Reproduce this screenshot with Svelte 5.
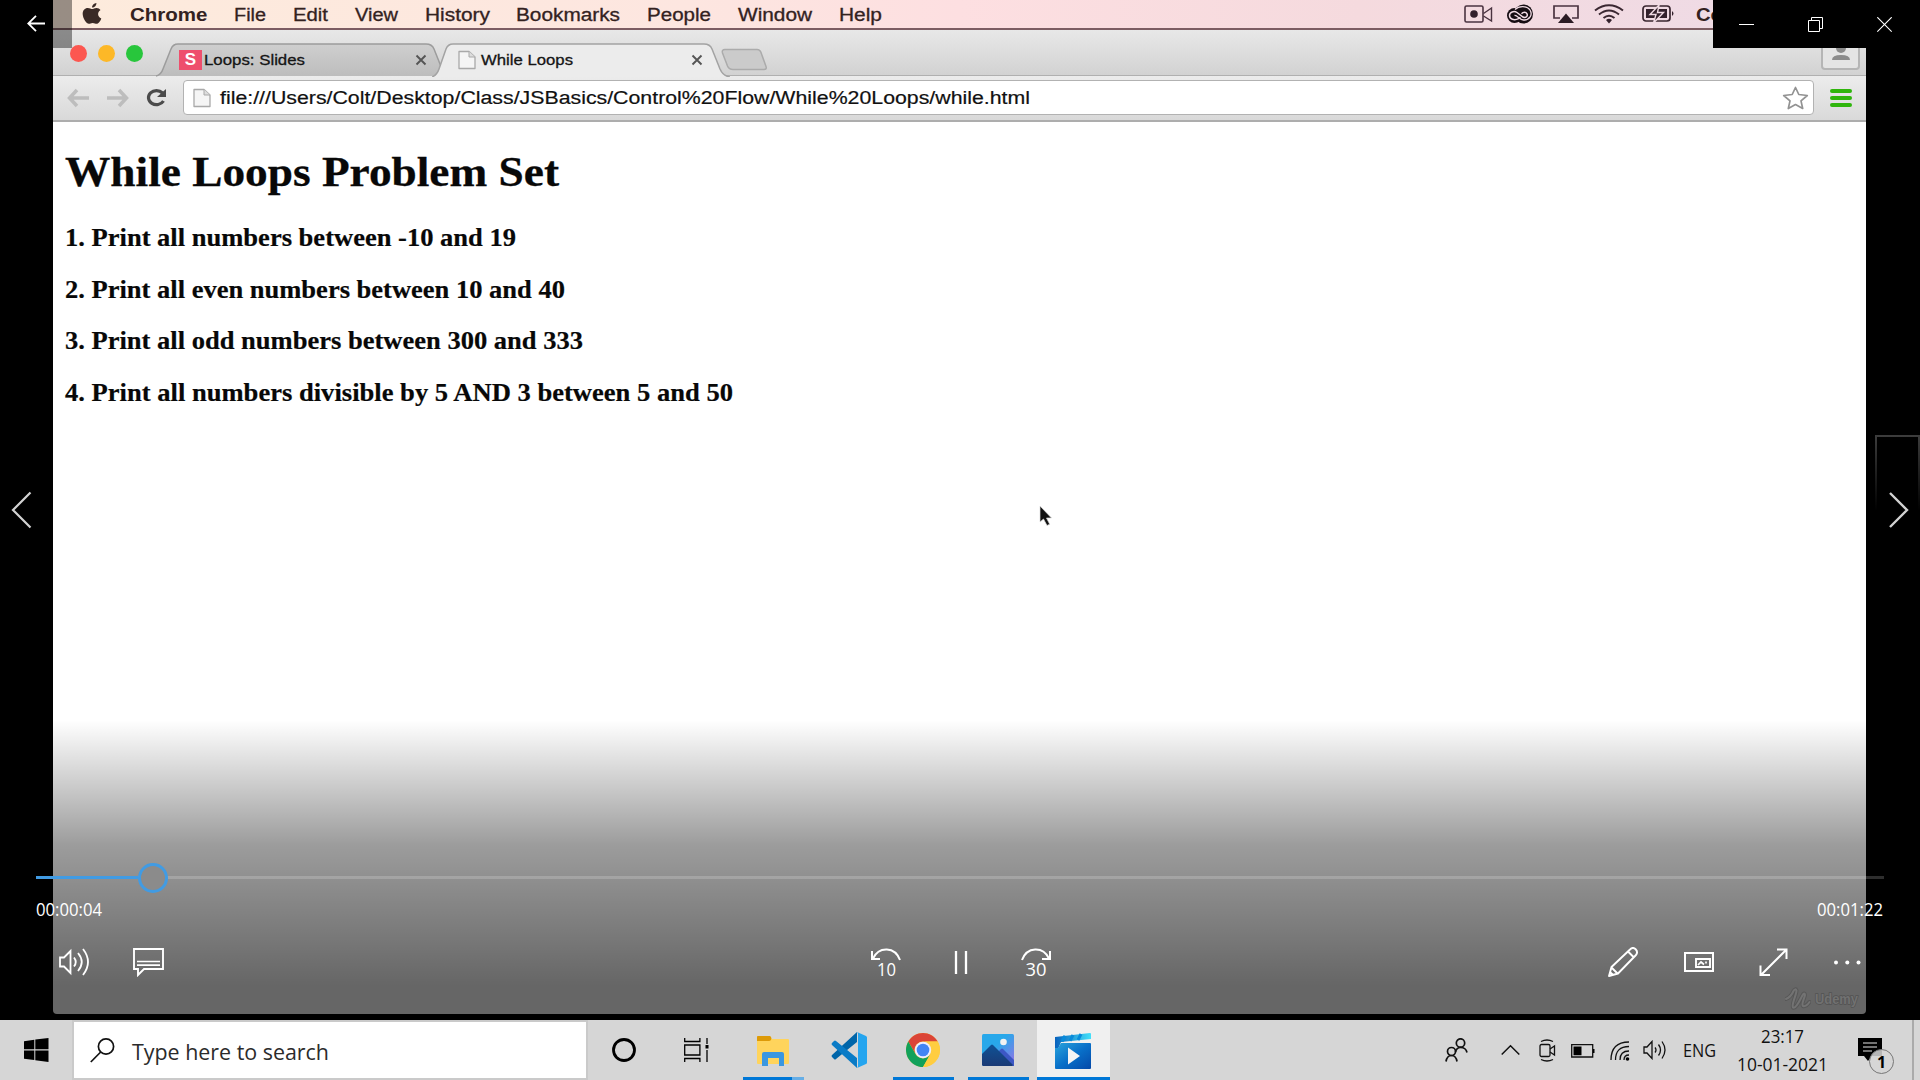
<script>
  const menus = [
    ['Chrome', 77.5, true], ['File', 32], ['Edit', 35], ['View', 43], ['History', 65],
    ['Bookmarks', 104], ['People', 64], ['Window', 74], ['Help', 43]
  ];
  const problems = [
    ['1. Print all numbers between -10 and 19', 451],
    ['2. Print all even numbers between 10 and 40', 500],
    ['3. Print all odd numbers between 300 and 333', 518],
    ['4. Print all numbers divisible by 5 AND 3 between 5 and 50', 668]
  ];
</script>

<!-- One line of text fitted to an exact advance width -->
{#snippet fit(text, width, height, baseline, kind)}
  <svg class="fit {kind}" {width} {height}>
    <text x="0" y={baseline} textLength={width} lengthAdjust="spacingAndGlyphs">{text}</text>
  </svg>
{/snippet}

{#snippet page()}
  <svg class="doc" width="18" height="20" viewBox="0 0 18 20">
    <path d="M1 1.5h10l6 5.500v11.500H1z" fill="#f5f5f5" stroke="#a9a9a9" stroke-width="1.300" stroke-linejoin="round" />
    <path d="M11 1.500V7h6" fill="#ddd" stroke="#a9a9a9" />
  </svg>
{/snippet}

<div class="screen">
  <div class="player">
    <div class="video">
      <header class="menubar">
        <svg class="apple" width="20" height="22" viewBox="0 0 20 22">
          <path d="M14.400 0c.2 2.300-2 4.700-4.300 4.600C9.900 2.400 12 .2 14.400 0zM10.300 6c1 0 2.300-1.200 4.300-1.100 1.500.1 3 .8 3.900 2.200-3.600 2.300-2.900 7 .8 8.400-.9 2.500-2.700 5.300-4.600 5.300-1.500 0-2.100-.9-4-.9s-2.500.9-3.900.9C4.600 20.800 1 16 .7 11.300.5 7.300 2.900 4.900 5.800 4.900 7.600 4.900 9.200 6 10.300 6z" fill="#3a2a26" />
        </svg>
        <nav>
          {#each menus as [label, w, bold]}
            {@render fit(label, w, 28, 20.500, bold ? 'menu bold' : 'menu')}
          {/each}
        </nav>
        <div class="status">
          <svg width="29" height="20" viewBox="0 0 29 20"><rect x="1" y="2" width="18" height="16" rx="1.500" fill="none" stroke="#4a3340" stroke-width="1.600" /><circle cx="10" cy="10" r="3.800" fill="#33212c" /><path d="M19.500 9.500l8-5.500v13l-8-5" fill="none" stroke="#4a3340" stroke-width="1.400" /></svg>
          <svg width="29" height="20" viewBox="0 0 29 20">
            <circle cx="17.500" cy="10" r="9.500" fill="#160e13" /><circle cx="8.500" cy="11.500" r="7.500" fill="#160e13" />
            <path d="M14.500 13.500l-2 1.200C8 17 3.500 15 3.500 11.500S8 6.500 11 8.500l6 4.500c3 1.500 5-1 4-3.200-1-2-3.800-2-5.500 0" fill="none" stroke="#f0dbe4" stroke-width="1.500" />
            <path d="M9 5.500C13 1.500 21 1.500 24 6c3 5-.5 10-6.500 10-4 0-6-5-9-4.500" fill="none" stroke="#f0dbe4" stroke-width="1.300" />
          </svg>
          <svg width="26" height="20" viewBox="0 0 26 20"><path d="M7 14H1V2h24v12h-6" fill="none" stroke="#4a3340" stroke-width="1.700" /><path d="M13 9.500l8 9.500H5z" fill="#2b1c25" /></svg>
          <svg width="30" height="20" viewBox="0 0 30 20"><path d="M1 6.500Q15-4 29 6.500M5 10.500Q15 2.500 25 10.500M9.500 14Q15 9.500 20.500 14" fill="none" stroke="#3a2731" stroke-width="2" /><path d="M12 16q3-2.500 6 0l-3 3.500z" fill="#33212c" /></svg>
          <svg width="33" height="20" viewBox="0 0 33 20"><rect x="1" y="2" width="27" height="15" rx="3" fill="none" stroke="#3a2731" stroke-width="1.700" /><path d="M4 5h21v9H4z" fill="#33212c" /><path d="M17 1L8 10.500h6L11.500 19l10-10.500h-6z" fill="#33212c" stroke="#f0dbe4" stroke-width="1.400" /><path d="M30 7q3 2.500 0 5z" fill="#33212c" /></svg>
          {@render fit('Co', 27, 28, 20.500, 'menu semi')}
        </div>
      </header>

      <div class="tabs">
        <div class="lights"><i class="red"></i><i class="amber"></i><i class="green"></i></div>
        <div class="tab inactive">
          <svg class="shape" width="298" height="34" viewBox="0 0 298 34"><path d="M0 33Q5 32 7 26L15 6Q17 1 22 1H270Q276 1 278 6L286 26Q289 33 296 33" fill="url(#shade)" stroke="#9c9c9c" stroke-width="1.500" /><defs><linearGradient id="shade" x2="0" y2="1"><stop stop-color="#cfcfcf" /><stop offset="1" stop-color="#bdbdbd" /></linearGradient></defs></svg>
          <b class="slides">S</b>
          {@render fit('Loops: Slides', 101, 30, 20.500, 'tablabel')}
          <svg class="x" width="12" height="12" viewBox="0 0 12 12"><path d="M1.500 1.500l9 9m0-9l-9 9" stroke="#555" stroke-width="1.900" /></svg>
        </div>
        <div class="tab active">
          <svg class="shape" width="298" height="34" viewBox="0 0 298 34"><path d="M0 34Q5 32 7 26L14 6Q16 1 21 1H272Q278 1 280 6L288 26Q291 33 298 34" fill="#ececec" stroke="#a3a3a3" stroke-width="1.500" /></svg>
          {@render page()}
          {@render fit('While Loops', 92, 30, 20.500, 'tablabel')}
          <svg class="x" width="12" height="12" viewBox="0 0 12 12"><path d="M1.500 1.500l9 9m0-9l-9 9" stroke="#555" stroke-width="1.900" /></svg>
        </div>
        <svg class="newtab" width="47" height="24" viewBox="0 0 47 24"><path d="M4 1.500H36q3 0 4 3l5 14q1 3-2 3H12q-4 0-5.500-3.500L1.500 5q-1-3.500 2.500-3.500z" fill="#cbcbcb" stroke="#ababab" stroke-width="1.500" /></svg>
        <div class="profile">
          <svg width="20" height="22" viewBox="0 0 20 22"><circle cx="10" cy="8" r="5" fill="#8b8b8b" /><path d="M1 20q0-5 9-5t9 5z" fill="#8b8b8b" /></svg>
        </div>
      </div>

      <div class="toolbar">
        <svg width="23" height="20" viewBox="0 0 23 20"><path d="M10 2L2.500 10l7.500 8M3 10h19" fill="none" stroke="#bdbdbd" stroke-width="3.500" /></svg>
        <svg width="23" height="20" viewBox="0 0 23 20"><path d="M13 2l7.500 8L13 18M20 10H1" fill="none" stroke="#bdbdbd" stroke-width="3.500" /></svg>
        <svg class="reload" width="21" height="20" viewBox="0 0 21 20"><path d="M16.500 5A8 7 0 1 0 17.500 13" fill="none" stroke="#4b4b4b" stroke-width="3.200" /><path d="M20 1v8h-9z" fill="#4b4b4b" /></svg>
        <div class="address">
          {@render page()}
          {@render fit('file:///Users/Colt/Desktop/Class/JSBasics/Control%20Flow/While%20Loops/while.html', 810, 33, 23, 'url')}
          <svg class="star" width="27" height="24" viewBox="0 0 27 24"><path d="M13.500 1.500l3.300 7 8.500 1-6.300 5.400 1.700 7.600-7.200-3.900-7.200 3.900L8 14.900 1.700 9.500l8.500-1z" fill="#fff" stroke="#929292" stroke-width="1.700" stroke-linejoin="round" /></svg>
        </div>
        <div class="burger"><i></i><i></i><i></i></div>
      </div>

      <main>
        <h1>{@render fit('While Loops Problem Set', 494, 51, 37, 'title')}</h1>
        {#each problems as [text, w]}
          <h3>{@render fit(text, w, 30, 23, 'problem')}</h3>
        {/each}
      </main>
      <svg class="cursor" width="14" height="22" viewBox="0 0 14 22"><path d="M1 1v16l3.500-3L8 20.500l2.700-1.300L7.500 13H12.500z" fill="#111" stroke="#ddd" stroke-width=".7" /></svg>
    </div>

    <div class="overlay">
      <div class="titlebar">
        <div class="back"><svg width="18" height="17" viewBox="0 0 18 17"><path d="M9 .8L1.200 8.500 9 16.200M1 8.500h17" fill="none" stroke="#fff" stroke-width="1.800" /></svg></div>
        <div class="window">
          <svg width="15" height="16" viewBox="0 0 15 16"><path d="M0 7.500h15" stroke="#fff" /></svg>
          <svg width="15" height="16" viewBox="0 0 15 16"><path d="M.5 3.500h11v11H.5zM3.500 3.500v-3h11v11h-3" fill="none" stroke="#fff" /></svg>
          <svg width="15" height="16" viewBox="0 0 15 16"><path d="M.3.300l14.400 14.400m0-14.400L.3 14.700" stroke="#fff" stroke-width="1.200" /></svg>
        </div>
      </div>
      <div class="skip">
        <svg width="22" height="38" viewBox="0 0 22 38"><path d="M19.500 1.500L2 19l17.500 17.500" fill="none" stroke="#d2d2d2" stroke-width="2.200" /></svg>
        <div class="next"><svg width="20" height="38" viewBox="0 0 20 38"><path d="M1 2l17 17L1 36" fill="none" stroke="#d2d2d2" stroke-width="2.400" /></svg></div>
      </div>
      <div class="controls">
        <div class="track"><div class="played"></div><div class="thumb"></div></div>
        <div class="times">
          {@render fit('00:00:04', 66, 24, 19, 'time')}
          {@render fit('00:01:22', 66, 24, 19, 'time')}
        </div>
        <div class="buttons">
          <div class="group left">
            <svg width="30" height="30" viewBox="0 0 30 30"><path d="M1 10.500h4l6.500-6.500v22L5 19.500H1z" fill="none" stroke="#fff" stroke-width="1.800" /><path d="M15 10.500q3.500 4.500 0 9M19 6q7.500 9 0 18M24 2q10 13 0 26" fill="none" stroke="#fff" stroke-width="1.800" /></svg>
            <svg width="31" height="30" viewBox="0 0 31 30"><path d="M1 2h29v20H11l-6 6v-6H1z" fill="none" stroke="#fff" stroke-width="1.900" /><path d="M4 14.500h23M4 18.200h23" stroke="#fff" stroke-width="1.700" /></svg>
          </div>
          <div class="group center">
            <svg class="seek" width="32" height="34" viewBox="0 0 32 34"><path d="M2 4v8h8M3 11.500C9-1 25-.5 30 13" fill="none" stroke="#fff" stroke-width="2" /><text x="7" y="29" textLength="19" lengthAdjust="spacingAndGlyphs">10</text></svg>
            <svg width="14" height="30" viewBox="0 0 14 30"><path d="M2 4v23M12 4v23" stroke="#fff" stroke-width="2.300" /></svg>
            <svg class="seek" width="32" height="34" viewBox="0 0 32 34"><path d="M30 4v8h-8M29 11.500C23-1 7-.5 2 13" fill="none" stroke="#fff" stroke-width="2" /><text x="5.500" y="29" textLength="21" lengthAdjust="spacingAndGlyphs">30</text></svg>
          </div>
          <div class="group right">
            <svg width="31" height="30" viewBox="0 0 31 30"><path d="M1 29l2.500-9L22 2.500c4-4 9 1.500 6 5.500L10 26.500zM3.500 20.500l6 6M20 4.500l6 6M2 25l3 3" fill="none" stroke="#fff" stroke-width="1.900" stroke-linejoin="round" /></svg>
            <svg width="30" height="30" viewBox="0 0 30 30"><path d="M1 6h28v18H1z" fill="none" stroke="#fff" stroke-width="2" /><path d="M12 12h14v8H12z" fill="none" stroke="#fff" stroke-width="1.900" /><path d="M14 18l3-3 3 2.500M22 14.500v2" fill="none" stroke="#fff" stroke-width="1.700" /></svg>
            <svg width="29" height="30" viewBox="0 0 29 30"><path d="M18 2.500h9.500V12M27 3L2 28M1.500 18.500V28H11" fill="none" stroke="#fff" stroke-width="2" /></svg>
            <svg width="28" height="30" viewBox="0 0 28 30"><circle cx="3" cy="15.500" r="2" fill="#fff" /><circle cx="14.300" cy="15.500" r="2" fill="#fff" /><circle cx="25.500" cy="15.500" r="2" fill="#fff" /></svg>
          </div>
        </div>
        <div class="mark">
          <svg width="26" height="24" viewBox="0 0 26 24"><path d="M1 12Q6 10 8.500 4 10.500 1 11.500 3.500C11.500 8 6 18 8 20.500c3 2 8-10 10-13q2-2 2 .5c-1 5-4 9-2 11q3 1 6.500-4" fill="none" stroke="#535353" stroke-width="4" stroke-linecap="round" /><path d="M1 12Q6 10 8.500 4 10.500 1 11.500 3.500C11.500 8 6 18 8 20.500c3 2 8-10 10-13q2-2 2 .5c-1 5-4 9-2 11q3 1 6.500-4" fill="none" stroke="#787878" stroke-width="2" stroke-linecap="round" /></svg>
          {@render fit('Udemy', 43, 24, 17, 'brand')}
        </div>
      </div>
    </div>
  </div>

  <footer>
    <div class="start"><svg width="25" height="24" viewBox="0 0 25 24"><path d="M0 3.300L10.300 1.800V11.300H0zM11.300 1.600L24.500 0v11.300H11.300zM0 12.400h10.300v9.700L0 20.700zM11.300 12.400h13.200V24l-13.200-1.800z" /></svg></div>
    <div class="search">
      <svg width="25" height="25" viewBox="0 0 25 25"><circle cx="16" cy="8.500" r="7.600" fill="none" stroke="#111" stroke-width="1.700" /><path d="M10.700 14L.8 24" stroke="#111" stroke-width="1.700" /></svg>
      {@render fit('Type here to search', 197, 40, 28, 'query')}
    </div>
    <div class="apps">
      <div class="app"><svg width="26" height="26" viewBox="0 0 26 26"><circle cx="13" cy="13" r="10.500" fill="none" stroke="#000" stroke-width="2.800" /></svg></div>
      <div class="app view"><svg width="25" height="24" viewBox="0 0 25 24"><path d="M.7 0v3.500h15.200V0M.7 7h15.200v10H.7zM.7 24v-3.500h15.200V24M23 0v6M23 12v12" fill="none" stroke="#000" stroke-width="1.300" /><path d="M21.500 7h3v3.500h-3z" /></svg></div>
      <div class="app open split"><svg width="32" height="30" viewBox="0 0 32 30"><path d="M0 1q0-1 1-1h12l2 3h16q1 0 1 1v23q0 1-1 1H1q-1 0-1-1z" fill="#ffd45c" /><path d="M0 1q0-1 1-1h12q2 1 1 4-1 1-2 1H0z" fill="#dd9a08" /><path d="M5 30V18q0-2 2-2h18q2 0 2 2v12h-5v-8H11v8z" fill="#3b97e0" /></svg></div>
      <div class="app"><svg width="36" height="36" viewBox="0 0 36 36"><path d="M26 0v10L5 27q-1 1-2 0l-2-2q-1-1 0-2z" fill="#0065a9" /><path d="M26 36V26L5 9Q4 8 3 9l-2 2q-1 1 0 2z" fill="#0a7bc6" /><path d="M26 0l9 4q1 .5 1 1.500v25q0 1-1 1.500l-9 4q1-1 1-2V2q0-1-1-2z" fill="#25a5ef" /></svg></div>
      <div class="app open"><svg width="34" height="34" viewBox="0 0 34 34"><circle cx="17" cy="17" r="17" fill="#fc4" /><path d="M2.280 8.500A17 17 0 0 1 31.720 8.500H17A8.500 8.500 0 0 0 9.640 21.250z" fill="#db4437" /><path d="M2.280 8.500L9.640 21.250A8.500 8.500 0 0 0 24.360 21.250L17 34A17 17 0 0 1 2.280 8.500z" fill="#12a15a" /><path d="M31.720 8.500H17a8.500 8.500 0 0 1 7.360 12.750L17 34A17 17 0 0 0 31.720 8.500z" fill="#ffcd40" /><circle cx="17" cy="17" r="8.200" fill="#eef" /><circle cx="17" cy="17" r="6.300" fill="#4285f4" /></svg></div>
      <div class="app open"><svg width="32" height="32" viewBox="0 0 32 32"><defs><linearGradient id="sky" x2="1" y2="1"><stop offset=".4" stop-color="#28a8ea" /><stop offset="1" stop-color="#9a70e5" /></linearGradient><linearGradient id="hill" x2="0" y2="1"><stop stop-color="#0f5296" /><stop offset="1" stop-color="#1a3a75" /></linearGradient></defs><rect width="32" height="32" rx="1.500" fill="url(#sky)" /><path d="M14 20l5-5q1-1 2 0l11 11v6H14z" fill="#3c57c4" /><path d="M0 20l9-9q1-1 2 0l20 20-1 1H1l-1-1z" fill="url(#hill)" /><circle cx="21.500" cy="8" r="3.300" fill="#f2f2f2" /></svg></div>
      <div class="app open current"><svg width="36" height="36" viewBox="0 0 36 36"><defs><linearGradient id="film" x2="1" y2="1"><stop stop-color="#2aa4dc" /><stop offset=".5" stop-color="#0870c9" /><stop offset="1" stop-color="#0548a8" /></linearGradient><linearGradient id="clap" x2="1"><stop stop-color="#0862bd" /><stop offset="1" stop-color="#43e0fa" /></linearGradient></defs><path d="M0 4l35-4q1 0 1 1v5L6 9l-3 7H0z" fill="url(#clap)" /><path d="M10 2.800l-3 5.700M18 2l-3 5.700M26 1l-3 6" stroke="#078bdb" stroke-width="3" /><path d="M6 10h29q1 0 1 1v24q0 1-1 1H1q-1 0-1-1V15h3z" fill="url(#film)" /><path d="M13 14.500L25 23 13 31.500z" fill="#f4f4f4" /></svg></div>
    </div>
    <div class="tray">
      <svg class="people" width="23" height="24" viewBox="0 0 23 24"><circle cx="15.500" cy="5" r="4.200" fill="none" stroke="#111" stroke-width="1.700" /><circle cx="6.500" cy="13.500" r="4" fill="none" stroke="#111" stroke-width="1.700" /><path d="M10.500 14q1-4.500 5-4.500 5.500 0 6.500 5M1 23.500q1-6 5.500-6t5.500 6" fill="none" stroke="#111" stroke-width="1.700" /></svg>
      <svg class="up" width="19" height="12" viewBox="0 0 19 12"><path d="M.7 10.500l8.800-8.800 8.800 8.800" fill="none" stroke="#111" stroke-width="1.500" /></svg>
      <svg class="meet" width="17" height="23" viewBox="0 0 17 23"><rect x="1" y="5.500" width="10" height="12" rx="1.500" fill="none" stroke="#111" stroke-width="1.300" /><path d="M11 10l4.500-3v9L11 13M2 2.500q6-3 12 0M2 20.500q6 3 12 0" fill="none" stroke="#111" stroke-width="1.300" /></svg>
      <svg class="battery" width="24" height="14" viewBox="0 0 24 14"><path d="M.7.700h21v12.300H.7z" fill="none" stroke="#111" stroke-width="1.300" /><path d="M2.500 2.500h8v8.700h-8zM22 5h1.500v4H22z" /></svg>
      <svg class="wifi" width="20" height="20" viewBox="0 0 20 20"><path d="M1 19Q1 1 19 1M5.500 19Q5.500 5.500 19 5.500M10 19q0-9 9-9M14 19q0-5 5-5" fill="none" stroke="#111" stroke-width="1.300" /><circle cx="17.500" cy="18" r="1.800" /></svg>
      <svg class="vol" width="24" height="20" viewBox="0 0 24 20"><path d="M1 7h3l5-5.500v17L4 13H1z" fill="none" stroke="#111" stroke-width="1.300" /><path d="M12 7.500q2 2.500 0 5M15.500 4.500q4 5.500 0 11M19 1.500q6 8.500 0 17" fill="none" stroke="#111" stroke-width="1.300" /></svg>
      {@render fit('ENG', 33, 30, 22, 'sys')}
      <div class="clock">
        {@render fit('23:17', 43, 28, 21, 'sys')}
        {@render fit('10-01-2021', 91, 28, 21, 'sys')}
      </div>
      <svg class="note" width="37" height="38" viewBox="0 0 37 38"><path d="M0 1h24v18H14l-4 5-4-5H0z" /><path d="M5 6h14M5 10h14M5 14h9" stroke="#e4e4e4" stroke-width="1.200" /><circle cx="23.500" cy="24.500" r="12" fill="#d6d6d6" fill-opacity=".85" stroke="#777" /><text x="19" y="30.500">1</text></svg>
    </div>
    <div class="peek"></div>
  </footer>
</div>

<style>
  :global(body) { margin: 0; background: #000; }
  .screen { width: 1920px; height: 1080px; display: grid; grid-template-rows: 1020px 60px; overflow: hidden; font-family: "Liberation Sans", sans-serif; }
  svg { display: block; flex: none; }
  .fit { overflow: visible; }
  .player { display: grid; background: #000; padding: 0; }
  .video, .overlay { grid-area: 1 / 1; }
  .video { position: relative; width: 1813px; height: 1014px; margin-left: 53px; background: #fff; border-radius: 0 0 4px 4px; overflow: hidden; }

  .menubar { box-sizing: border-box; height: 30px; display: flex; align-items: flex-start; padding-left: 29px; border-bottom: 2px solid #7c5c62; background: linear-gradient(90deg, #fdebdc, #fde6e0 35%, #fddfe1 50%, #f5dade 72%, #eddbe7); }
  .apple { margin: 3px 28px 0 0; }
  nav { display: flex; gap: 26.800px; }
  .menu { font-size: 18px; fill: #33221f; stroke: #33221f; stroke-width: .3px; }
  .menu.bold, .menu.semi { font-weight: 700; stroke: none; }
  .status { display: grid; grid-template-columns: 42px 47px 41px 48px 54px 27px; align-items: center; height: 28px; margin-left: auto; margin-right: 143px; }
  .tabs { display: flex; box-sizing: border-box; height: 46px; padding: 14px 0 0 17px; background: linear-gradient(#e8e8e8, #d2d2d2); border-bottom: 1px solid #b0b0b0; }
  .lights { display: flex; gap: 11px; width: 86px; margin-right: 0; }
  .lights i { width: 17px; height: 17px; border-radius: 50%; margin-top: 1px; }
  .red { background: #fc5750; }
  .amber { background: #fdb827; }
  .green { background: #28c63c; }
  .tab { position: relative; display: flex; align-items: flex-start; width: 276px; box-sizing: border-box; }
  .tab > :global(*) { position: relative; }
  .tab .shape { position: absolute; left: 0; top: -1px; }
  .inactive { padding-left: 23px; }
  .active { padding-left: 26px; width: 289px; }
  .slides { width: 23px; height: 20px; margin: 6px 2px 0 0; background: #ee4f6d; color: #fff; font: 700 17px/20px "Liberation Sans", sans-serif; text-align: center; }
  .tab .doc { margin: 6px 5px 0 0; }
  .tablabel { font-size: 15px; fill: #151515; stroke: #151515; stroke-width: .3px; }
  .x { margin: 10px 0 0 auto; }
  .inactive .x { margin-right: 5px; }
  .active .x { margin-right: 18px; }
  .newtab { margin: 4px 0 0 0; }
  .profile { box-sizing: border-box; width: 39px; height: 40px; margin: -14px 6px 0 auto; border: 2px solid #b5b5b5; border-radius: 4px; background: #e4e4e4; display: flex; justify-content: center; align-items: flex-end; padding-bottom: 6px; }

  .toolbar { box-sizing: border-box; height: 46px; display: flex; align-items: center; padding: 0 14px 1px 14px; background: linear-gradient(#ececec, #d9d9d9); border-bottom: 2px solid #adadad; }
  .toolbar > svg { margin-right: 16px; }
  .toolbar > .reload { margin: 0 16px 0 1px; }
  .address { box-sizing: border-box; width: 1631px; height: 35px; display: flex; align-items: center; padding: 0 4px 0 9px; border: 1px solid #b2b2b2; border-radius: 4px; background: #fff; }
  .address .doc { margin-right: 9px; }
  .url { font-size: 18px; fill: #111; stroke: #111; stroke-width: .2px; }
  .star { margin-left: auto; }
  .burger { display: grid; gap: 3px; width: 22px; margin-left: auto; }
  .burger i { height: 4px; background: #2fb50c; border-radius: 2px; }

  main { padding: 27px 0 0 11.500px; font-family: "Liberation Serif", serif; }
  h1, h3 { margin: 0; }
  h1 { height: 74px; }
  h3 { height: 51.700px; }
  .title, .problem { font-family: "Liberation Serif", serif; font-weight: 700; fill: #080808; }
  .title { font-size: 42px; stroke: #080808; stroke-width: .3px; }
  .problem { font-size: 24.500px; stroke: #080808; stroke-width: .2px; }
  .cursor { position: absolute; left: 986px; top: 505px; }

  .overlay { position: relative; display: grid; grid-template-rows: 48px 387px 285px 300px; min-width: 0; }
  .titlebar { display: flex; justify-content: space-between; }
  .back { width: 45px; padding: 15px 0 0 27px; height: 33px; background: rgba(0, 0, 0, .4); }
  .window { box-sizing: border-box; width: 207px; display: flex; justify-content: space-between; padding: 17px 28px 0 26px; background: #000; }
  .skip { grid-row: 3; display: flex; justify-content: space-between; align-items: flex-start; }
  .skip > svg { margin: 56px 0 0 11px; }
  .next { box-sizing: border-box; width: 45px; height: 75px; padding: 54px 0 0 12px; border: 2px solid; border-image: linear-gradient(#3c3c3c, #000) 1; border-bottom: 0; }
  .controls { grid-row: 4; position: relative; box-sizing: border-box; padding: 156px 36px 0; background: linear-gradient(rgba(0, 0, 0, 0), rgba(0, 0, 0, .39) 125px, rgba(0, 0, 0, .6) 265px); }
  .track { height: 3px; background: rgba(255, 255, 255, .18); display: flex; align-items: center; }
  .played { width: 102px; height: 3px; background: #419be3; }
  .thumb { box-sizing: border-box; flex: none; width: 30px; height: 30px; border: 3px solid #419be3; border-radius: 50%; background: #8b8b8b; }
  .times { display: flex; justify-content: space-between; margin: 18px 1px 0 0; }
  .time { font-family: "Open Sans", sans-serif; font-size: 17.500px; fill: #fff; }
  .buttons { display: grid; grid-template-columns: 1fr auto 1fr; height: 30px; margin-top: 26px; }
  .group { display: flex; }
  .left { gap: 44px; padding-left: 23px; }
  .center { gap: 52px; padding-left: 1px; }
  .right { justify-content: flex-end; gap: 45px; padding-right: 23px; }
  .seek text { font: 18px "Open Sans", sans-serif; fill: #fff; }
  .mark { display: flex; justify-content: flex-end; gap: 4px; margin: 10px 26px 0 0; opacity: .75; }
  .brand { font-size: 14.500px; font-weight: 700; fill: #757575; stroke: #4c4c4c; stroke-width: 1.500px; paint-order: stroke; }

  footer { display: flex; background: #d6d6d6; }
  .start { width: 48px; padding: 18px 0 0 24px; }
  .search { box-sizing: border-box; width: 516px; display: flex; align-items: flex-start; padding: 16px 0 0 16px; border: 2px solid #cacaca; background: #fff; gap: 17px; }
  .search .query { margin-top: -6px; }
  .query { font-family: "Open Sans", sans-serif; font-size: 21.500px; fill: #2b2b2b; }
  .apps { display: flex; gap: 2px; margin-left: -1px; }
  .app { width: 73px; display: grid; grid-template-rows: 57px 3px; place-items: center; padding: 0; }
  .app > svg { margin-top: 3px; }
  .view > svg { margin: 2px 4px 0 0; }
  .open::after { content: ""; width: 61px; height: 3px; background: #0078d7; }
  .split::after { background: linear-gradient(90deg, #0078d7 49px, #66aee6 49px); }
  .open > svg { margin-right: 2px; }
  .split > svg { margin-top: 4px; }
  .current { background: #f0f0f0; }
  .current::after { width: 73px; }
  .current > svg { margin-top: 4px; }
  .tray { display: flex; align-items: flex-start; margin-left: auto; }
  .people { margin: 18px 33px 0 0; }
  .up { margin: 24px 19px 0 0; }
  .meet { margin: 19px 15px 0 0; }
  .battery { margin: 24px 15px 0 0; }
  .wifi { margin: 21px 13px 0 0; }
  .vol { margin: 20px 16px 0 0; }
  .sys { font-family: "Open Sans", sans-serif; font-size: 18px; fill: #111; }
  .tray > .sys { margin-top: 15px; }
  .clock { width: 91px; display: grid; justify-items: center; margin: 2px 30px 0 21px; }
  .note { margin-top: 17px; }
  .note text { font: 700 16px "Open Sans", sans-serif; }
  .peek { width: 6px; margin-left: 17px; border-left: 2px solid #aaa; }
</style>
